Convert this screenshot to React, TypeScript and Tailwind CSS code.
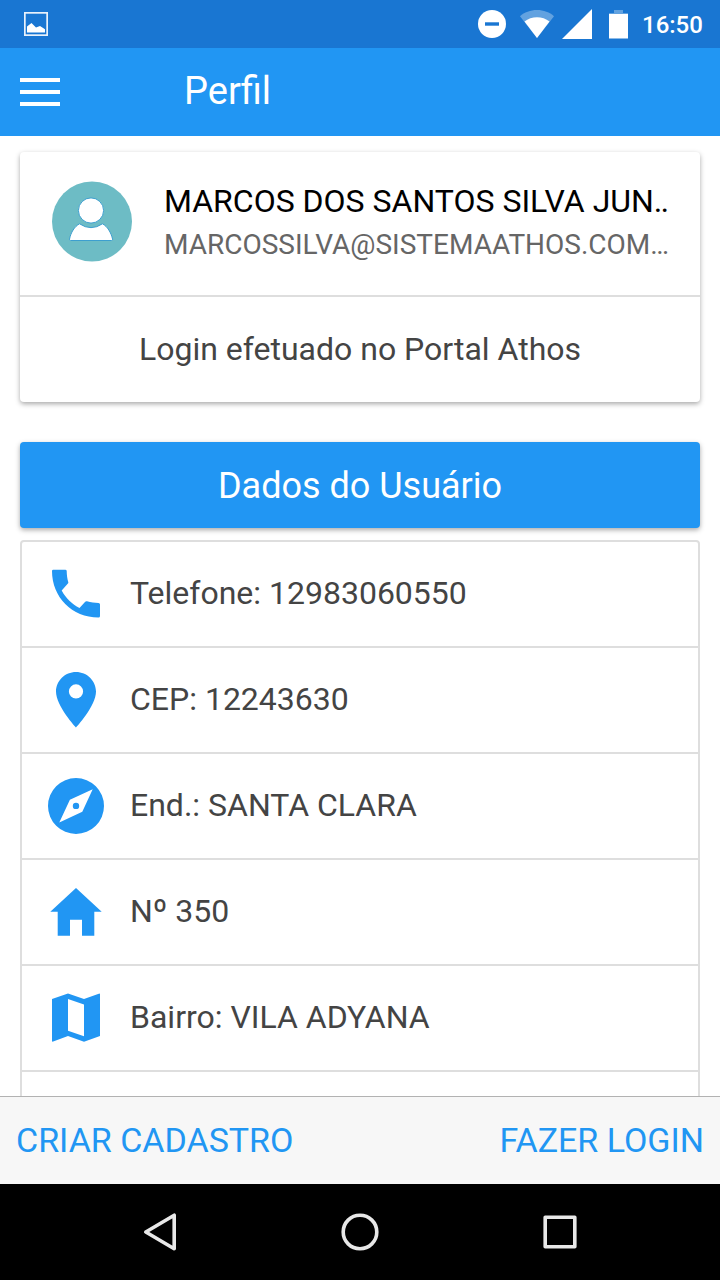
import type { ReactNode } from "react";

const rows: { label: string; icon: ReactNode }[] = [
  {
    label: "Telefone: 12983060550",
    icon: (
      <path d="M5.300 3.700H17.300Q18.600 3.700 18.700 5C18.800 9 19.200 12.500 20.300 16.200Q20.500 17 19.900 17.600L13.700 24.500C18 32.500 24 38 31.500 42L37.200 35.800Q38 35 39 35.300C43 36.500 46.500 37 50.500 37Q52 37.100 52 38.400V50Q52 51.500 50.500 51.500C24 51.500 4 31 4 5Q4 3.700 5.300 3.700Z" />
    ),
  },
  {
    label: "CEP: 12243630",
    icon: (
      <path
        fillRule="evenodd"
        d="M28 0C16.950 0 8 8.800 8 19.600C8 34.300 28 55.600 28 55.600S48 34.300 48 19.600C48 8.800 39.050 0 28 0ZM28 12.300a7.100 7.100 0 1 1 0 14.200a7.100 7.100 0 1 1 0-14.200Z"
      />
    ),
  },
  {
    label: "End.: SANTA CLARA",
    icon: (
      <path
        fillRule="evenodd"
        d="M28 0a28 28 0 1 1 0 56a28 28 0 1 1 0-56ZM44.700 11.300L21.900 21.800L11.300 44.500L34.300 33.800ZM28 24.700a3.200 3.200 0 1 1 0 6.400a3.200 3.200 0 1 1 0-6.400Z"
      />
    ),
  },
  {
    label: "Nº 350",
    icon: <path d="M22 51.700V35.700H34V51.700H46.300V27.700H53.700L28 3.900L2.300 27.700H9.700V51.700Z" />,
  },
  {
    label: "Bairro: VILA ADYANA",
    icon: (
      <path
        fillRule="evenodd"
        d="M4 9L20 3.500L36 9L50.800 3.700Q52 3.300 52 4.400V46.100L36 51.700L20 46.100L5.200 51.600Q4 52 4 50.900ZM20 9V40.700L36 46.200V14.500Z"
      />
    ),
  },
];

function StatusBar() {
  return (
    <div className="flex h-12 shrink-0 items-center justify-between bg-[#1976d2] pr-4 pl-6 text-white">
      <svg width="24" height="24" viewBox="0 0 24 24">
        <rect x="0.850" y="0.850" width="22.300" height="22.300" fill="none" stroke="#fff" strokeOpacity="0.9" strokeWidth="1.700" />
        <path fill="#fff" d="M3 20.500V14.500L7.500 11L12 15.500L16 14L21 17.200V20.500Z" />
      </svg>
      <div className="flex items-center">
        <svg width="28" height="28" viewBox="0 0 28 28">
          <circle cx="14" cy="14" r="14" fill="#fff" />
          <rect x="7" y="12.300" width="14" height="3.400" fill="#1976d2" />
        </svg>
        <svg className="ml-3.5" width="34" height="28" viewBox="0 0 34 28">
          <path fill="#fff" fillOpacity="0.320" d="M17 28L0 6.200C4.300 2.300 10.400 0 17 0S29.700 2.300 34 6.200Z" />
          <path fill="#fff" d="M17 28L4.500 11.500C8 8.700 12.400 7.200 17 7.200S26 8.700 29.500 11.500Z" />
        </svg>
        <svg className="ml-2" width="30" height="30" viewBox="0 0 30 30">
          <path fill="#fff" d="M0 30L30 0V30Z" />
        </svg>
        <svg className="ml-[17px]" width="19" height="29" viewBox="0 0 19 29">
          <path fill="#fff" fillOpacity="0.320" d="M5 0H14V3H19V5H0V3H5Z" />
          <path fill="#fff" d="M0 4H19V28.500H0Z" />
        </svg>
        <span className="ml-3.5 w-[62px] pt-px text-[24px] leading-7 font-medium whitespace-nowrap">16:50</span>
      </div>
    </div>
  );
}

export default function App() {
  return (
    <div className="flex h-[1280px] w-[720px] flex-col overflow-hidden bg-white font-['Roboto',sans-serif]">
      <StatusBar />

      <header className="flex h-[88px] shrink-0 items-center bg-[#2196f3] pl-5 text-white">
        <div className="flex w-10 flex-col gap-2">
          <span className="h-1 bg-white" />
          <span className="h-1 bg-white" />
          <span className="h-1 bg-white" />
        </div>
        <h1 className="ml-31 pb-0.5 text-[38px] leading-[48px]">Perfil</h1>
      </header>

      <main className="flex min-h-0 flex-1 flex-col overflow-hidden px-5 pt-4">
        <section className="h-[250px] shrink-0 rounded-[4px] bg-white shadow-[0_2px_5px_rgba(0,0,0,0.34)]">
          <div className="flex h-[145px] border-b-2 border-[#dedede] pt-[29px] pr-8 pl-8">
            <svg className="shrink-0" width="80" height="81" viewBox="0 0 80 81">
              <circle cx="40" cy="40.500" r="40" fill="#6dbcc5" />
              <g fill="#fff" stroke="#3d9fcf" strokeWidth="1">
                <path d="M27.500 42.800Q39 50.500 50.500 42.800C55.500 45.500 59 51.500 60.600 58.200Q60.700 59.500 59.600 59.500H18.500Q17.300 59.500 17.500 58.200C18.800 51.500 22.500 45.500 27.500 42.800Z" />
                <circle cx="39" cy="29.500" r="14.500" fill="#6dbcc5" stroke="none" />
                <circle cx="39" cy="29.500" r="12.600" />
              </g>
            </svg>
            <div className="ml-8 w-[504px] overflow-hidden whitespace-nowrap">
              <h2 className="h-10 text-[32px] leading-10 text-black">MARCOS DOS SANTOS SILVA JUN…</h2>
              <p className="mt-1 h-10 text-[28px] leading-10 text-[#666]">MARCOSSILVA@SISTEMAATHOS.COM…</p>
            </div>
          </div>
          <div className="flex h-[105px] items-center justify-center pb-0.5 text-[32px] text-[#444]">
            Login efetuado no Portal Athos
          </div>
        </section>

        <button className="mt-10 flex h-[86px] w-full shrink-0 items-center justify-center rounded-[4px] bg-[#2196f3] pt-0.5 text-[36px] text-white shadow-[0_2px_5px_rgba(0,0,0,0.34)]">
          Dados do Usuário
        </button>

        <ul className="mt-3 shrink-0 rounded-[4px] border-2 border-[#dedede]">
          {rows.map((row) => (
            <li key={row.label} className="flex h-[106px] items-center border-b-2 border-[#dedede] pl-[26px]">
              <svg className="shrink-0" width="56" height="56" viewBox="0 0 56 56" fill="#2196f3">
                {row.icon}
              </svg>
              <span className="ml-[26px] pb-0.5 text-[32px] whitespace-nowrap text-[#444]">{row.label}</span>
            </li>
          ))}
          <li className="h-[106px]" />
        </ul>
      </main>

      <footer className="flex h-[88px] shrink-0 items-center justify-between border-t border-[#b2b2b2] bg-[#f7f7f7] px-4 text-[34px] text-[#2196f3]">
        <button>CRIAR CADASTRO</button>
        <button>FAZER LOGIN</button>
      </footer>

      <nav className="flex h-24 shrink-0 items-center justify-center gap-40 bg-black">
        <svg width="40" height="40" viewBox="0 0 40 40" fill="none" stroke="#e8e8e8" strokeWidth="3.600" strokeLinejoin="round">
          <path d="M34.200 3.200V36.800L5.800 20Z" />
        </svg>
        <svg width="40" height="40" viewBox="0 0 40 40" fill="none" stroke="#e8e8e8" strokeWidth="3.600">
          <circle cx="20" cy="20" r="16.800" />
        </svg>
        <svg width="40" height="40" viewBox="0 0 40 40" fill="none" stroke="#e8e8e8" strokeWidth="3.600" strokeLinejoin="round">
          <rect x="5.200" y="5.200" width="29.600" height="29.600" />
        </svg>
      </nav>
    </div>
  );
}
